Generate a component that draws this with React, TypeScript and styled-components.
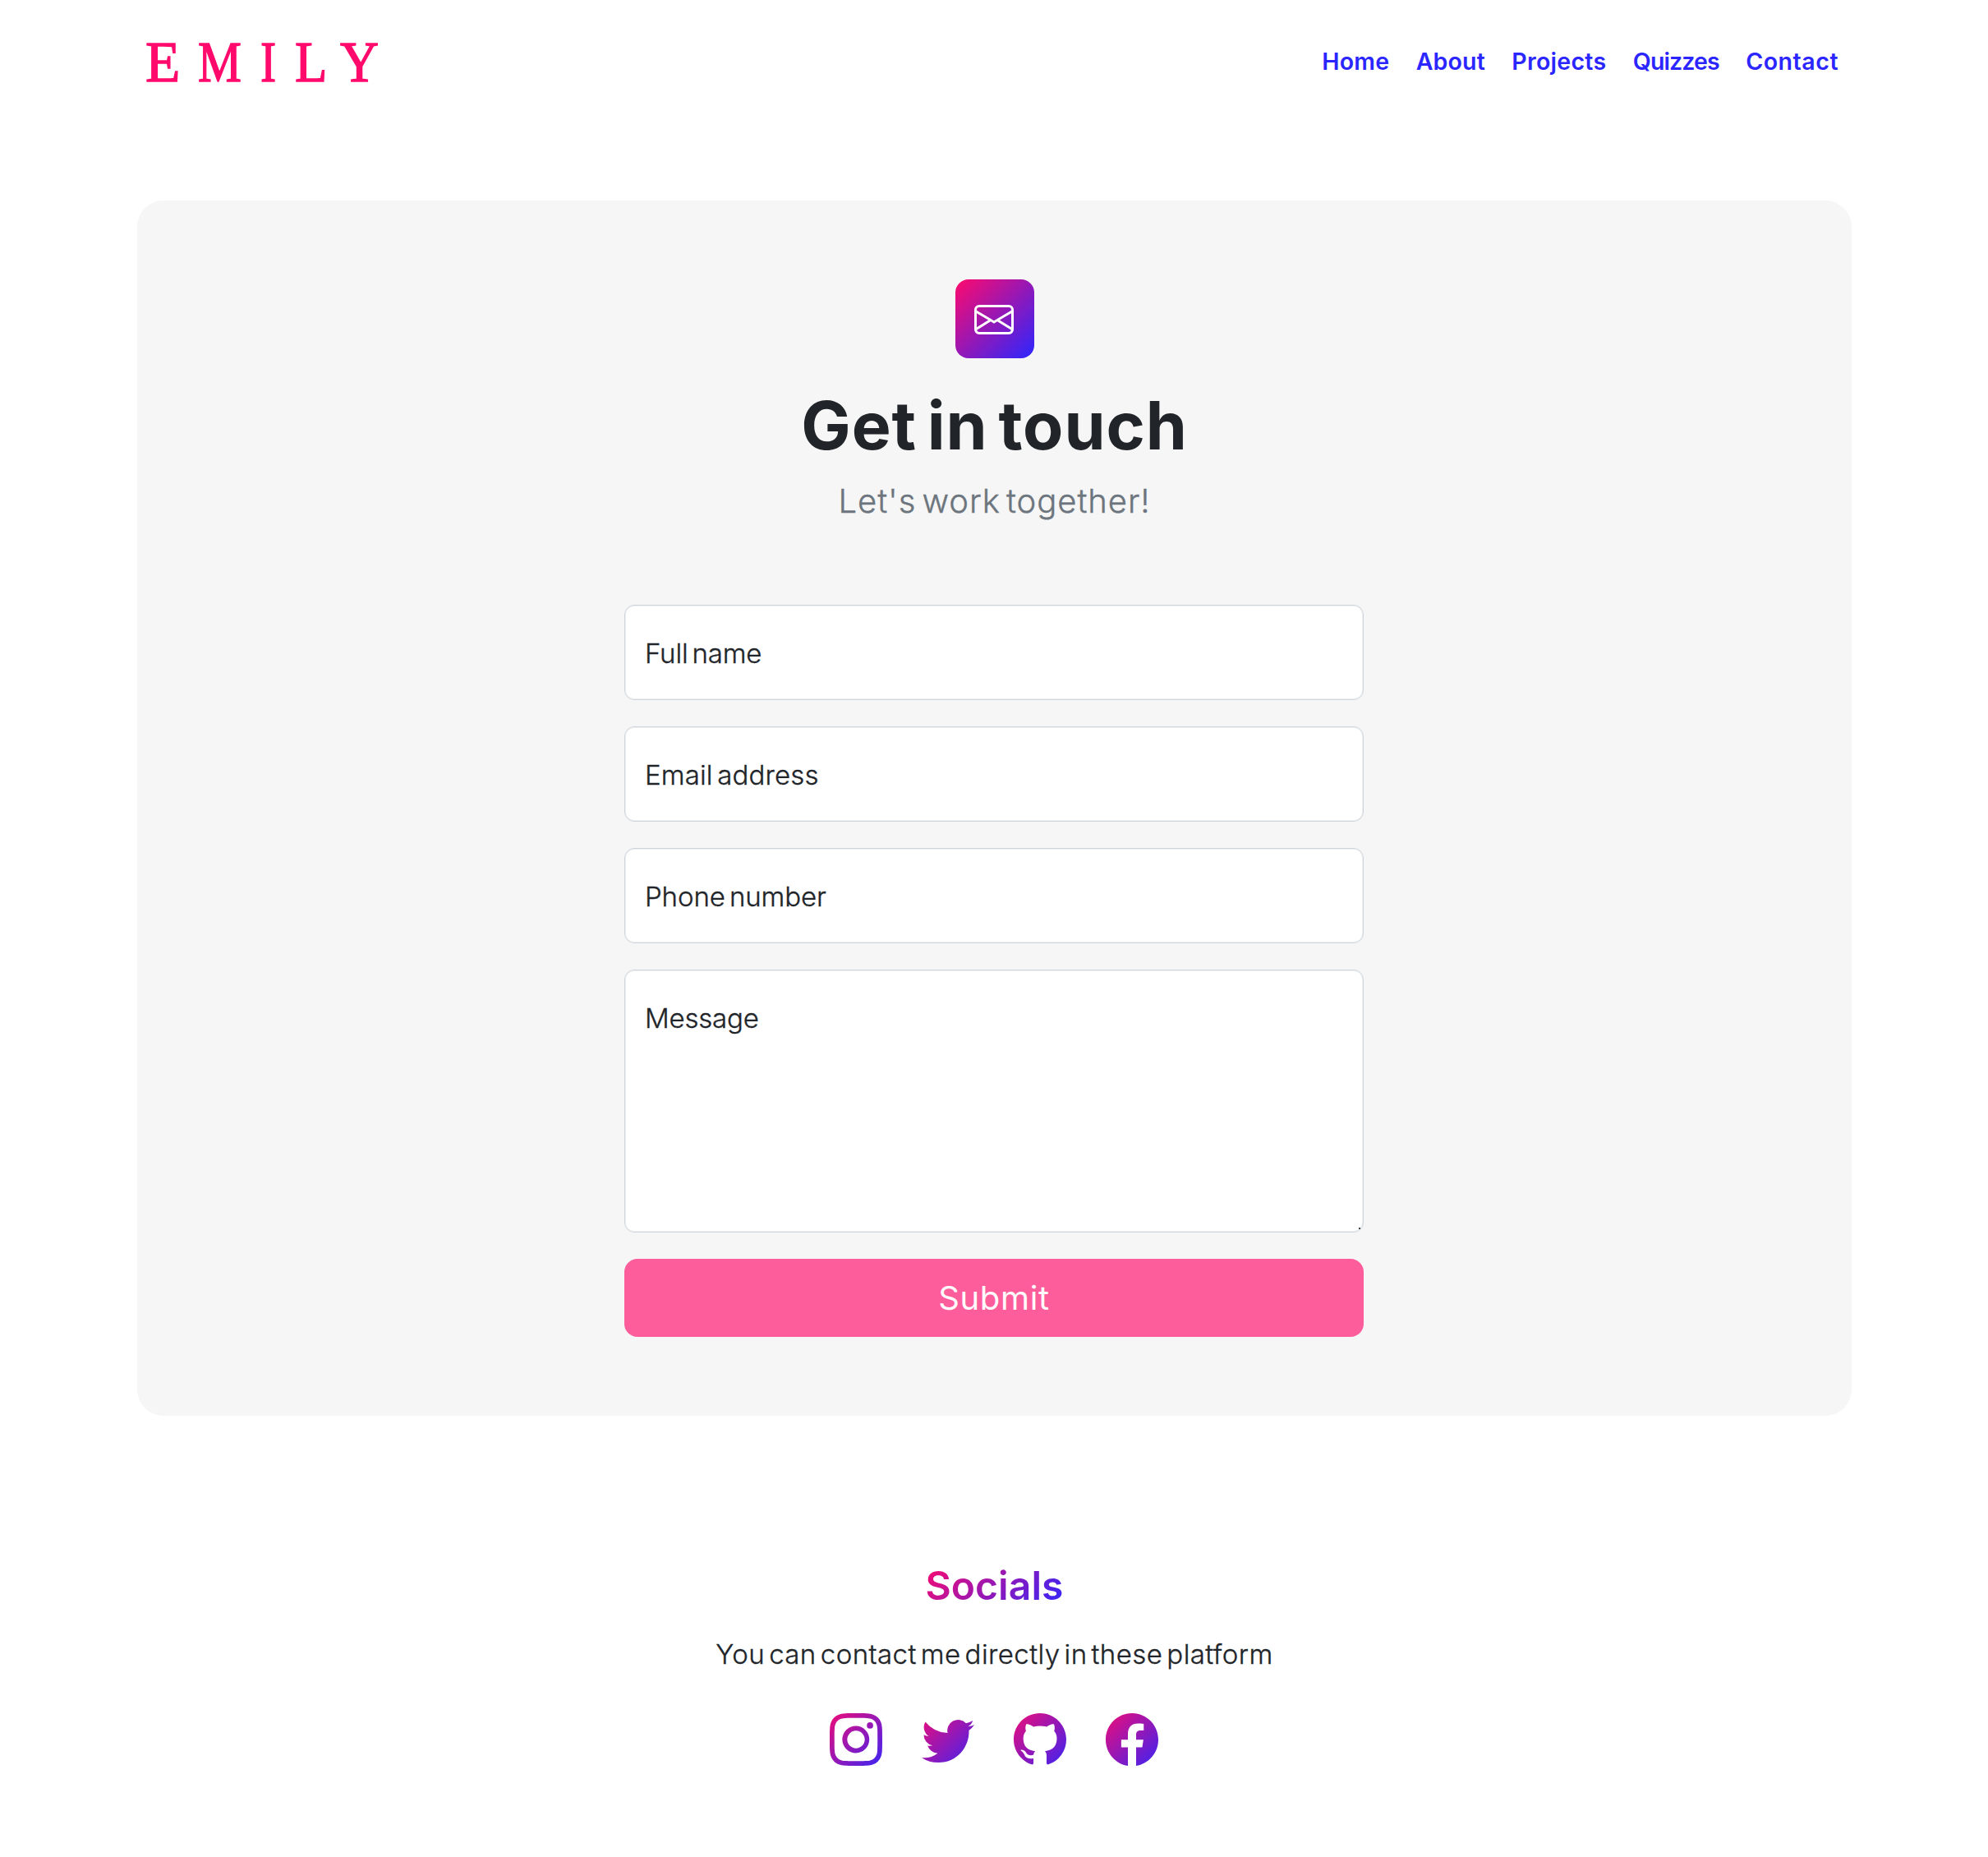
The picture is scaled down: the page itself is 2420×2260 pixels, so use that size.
import React from "react";
import styled, { createGlobalStyle } from "styled-components";
import { BsEnvelope, BsFacebook, BsGithub, BsInstagram, BsTwitter } from "react-icons/bs";

const pink = "#ff0a6c";
const blue = "#2b26ff";
const ink = "#212529";

const GlobalStyle = createGlobalStyle`
  *, *::before, *::after { box-sizing: border-box; }
  body {
    margin: 0;
    background: #fff;
    color: ${ink};
    font-family: Inter, "Open Sans", sans-serif;
    font-weight: 300;
    font-size: 33px;
    line-height: 50px;
  }
`;

const Page = styled.div`
  min-height: 2260px;
  display: flex;
  flex-direction: column;
  padding: 0 166px 0 167px;
`;

const Header = styled.header`
  height: 149px;
  display: flex;
  align-items: center;
  justify-content: space-between;
  padding: 0 16px 0 10px;
`;

const Logo = styled.a`
  display: flex;
  padding-top: 3px;
  color: ${pink};
  font-family: "Liberation Serif", serif;
  font-weight: 400;
  font-size: 70px;
  line-height: 80px;
  -webkit-text-stroke: 1.4px ${pink};
`;

const Letter = styled.span<{ $width: number; $stretch: number }>`
  display: block;
  width: ${(p) => p.$width}px;
  transform: scaleX(${(p) => p.$stretch});
  transform-origin: left center;
`;

const Nav = styled.nav`
  display: flex;
  gap: 32.4px;
`;

const NavLink = styled.a<{ $tracking: number }>`
  color: ${blue};
  font-weight: 600;
  font-size: 28.5px;
  line-height: 44px;
  letter-spacing: ${(p) => p.$tracking}px;
`;

const Card = styled.main`
  margin-top: 95px;
  height: 1478.5px;
  padding: 96px 0;
  border-radius: 32px;
  background: #f6f6f6;
  display: flex;
  flex-direction: column;
  align-items: center;
`;

const Feature = styled.div`
  width: 96px;
  height: 96px;
  border-radius: 16px;
  background: linear-gradient(135deg, ${pink}, ${blue});
  color: #fff;
  font-size: 48px;
  display: flex;
  align-items: center;
  justify-content: center;
  padding: 2px 1px 0 0;
  svg { display: block; }
`;

const Title = styled.h1`
  margin: 34px 0 0;
  font-weight: 700;
  font-size: 80.5px;
  line-height: 96px;
  letter-spacing: 0.9px;
  word-spacing: -7px;
`;

const Lead = styled.p`
  margin: 14px 0 96px;
  color: #6c757d;
  font-size: 40px;
  line-height: 60px;
  letter-spacing: 0.95px;
  word-spacing: -5px;
  -webkit-text-stroke: 0.4px #6c757d;
`;

const Form = styled.div`
  width: 900px;
  margin-left: -1px;
  display: flex;
  flex-direction: column;
  gap: 32px;
`;

const Field = styled.div<{ $tall?: boolean; $tracking: number }>`
  position: relative;
  height: ${(p) => (p.$tall ? 320 : 116)}px;
  padding: 33px 24px;
  border: 1px solid #ced4da;
  border-radius: 12px;
  background: #fff;
  box-shadow: inset 0 0 0 1px #eef0f2;
  letter-spacing: ${(p) => p.$tracking}px;
  word-spacing: -4px;
  -webkit-text-stroke: 0.35px ${ink};
`;

const Grip = styled.span`
  position: absolute;
  right: 3px;
  bottom: 3px;
  width: 2px;
  height: 2px;
  background: #444;
`;

const Submit = styled.button`
  height: 94.5px;
  padding: 2px 0 0;
  border: 0;
  border-radius: 16px;
  background: #fd5d9b;
  color: #fffafc;
  font: 400 40px/60px Inter, "Open Sans", sans-serif;
  letter-spacing: 0.64px;
`;

const Footer = styled.footer`
  margin-top: 178px;
  display: flex;
  flex-direction: column;
  align-items: center;
`;

const SocialTitle = styled.h2`
  margin: 0;
  font-weight: 600;
  font-size: 48px;
  line-height: 58px;
  letter-spacing: 0.1px;
  color: transparent;
  background: linear-gradient(135deg, ${pink}, ${blue});
  -webkit-background-clip: text;
  background-clip: text;
`;

const SocialText = styled.p`
  margin: 29px 0 47px;
  letter-spacing: 0.42px;
  word-spacing: -4.6px;
  -webkit-text-stroke: 0.35px ${ink};
`;

const SocialRow = styled.div`
  display: flex;
  gap: 48px;
  margin-left: -1px;
  font-size: 64px;
  svg { display: block; }
`;

const GradientDefs = styled.svg`
  position: absolute;
  width: 0;
  height: 0;
`;

const letters: [string, number, number][] = [
  ["E", 63.5, 0.99],
  ["M", 76, 0.85],
  ["I", 42, 0.82],
  ["L", 55, 0.92],
  ["Y", 48, 0.93],
];

const links: [string, number][] = [
  ["Home", 0.25],
  ["About", 0.15],
  ["Projects", 0.3],
  ["Quizzes", -0.9],
  ["Contact", 0.55],
];

const socials = [BsInstagram, BsTwitter, BsGithub, BsFacebook];

export default function App() {
  return (
    <Page>
      <GlobalStyle />
      <Header>
        <Logo>
          {letters.map(([char, width, stretch]) => (
            <Letter key={char} $width={width} $stretch={stretch}>{char}</Letter>
          ))}
        </Logo>
        <Nav>
          {links.map(([label, tracking]) => (
            <NavLink key={label} $tracking={tracking}>{label}</NavLink>
          ))}
        </Nav>
      </Header>
      <Card>
        <Feature><BsEnvelope /></Feature>
        <Title>Get in touch</Title>
        <Lead>Let's work together!</Lead>
        <Form>
          <Field $tracking={-0.18}>Full name</Field>
          <Field $tracking={0.15}>Email address</Field>
          <Field $tracking={-0.1}>Phone number</Field>
          <Field $tall $tracking={-0.2}>Message<Grip /></Field>
          <Submit>Submit</Submit>
        </Form>
      </Card>
      <Footer>
        <SocialTitle>Socials</SocialTitle>
        <SocialText>You can contact me directly in these platform</SocialText>
        <GradientDefs>
          <defs>
            <linearGradient id="brand" gradientUnits="userSpaceOnUse" x1="-1.5" y1="-1.5" x2="17.5" y2="17.5">
              <stop offset="0" stopColor={pink} />
              <stop offset="1" stopColor={blue} />
            </linearGradient>
          </defs>
        </GradientDefs>
        <SocialRow>
          {socials.map((Icon, i) => <Icon key={i} fill="url(#brand)" />)}
        </SocialRow>
      </Footer>
    </Page>
  );
}
